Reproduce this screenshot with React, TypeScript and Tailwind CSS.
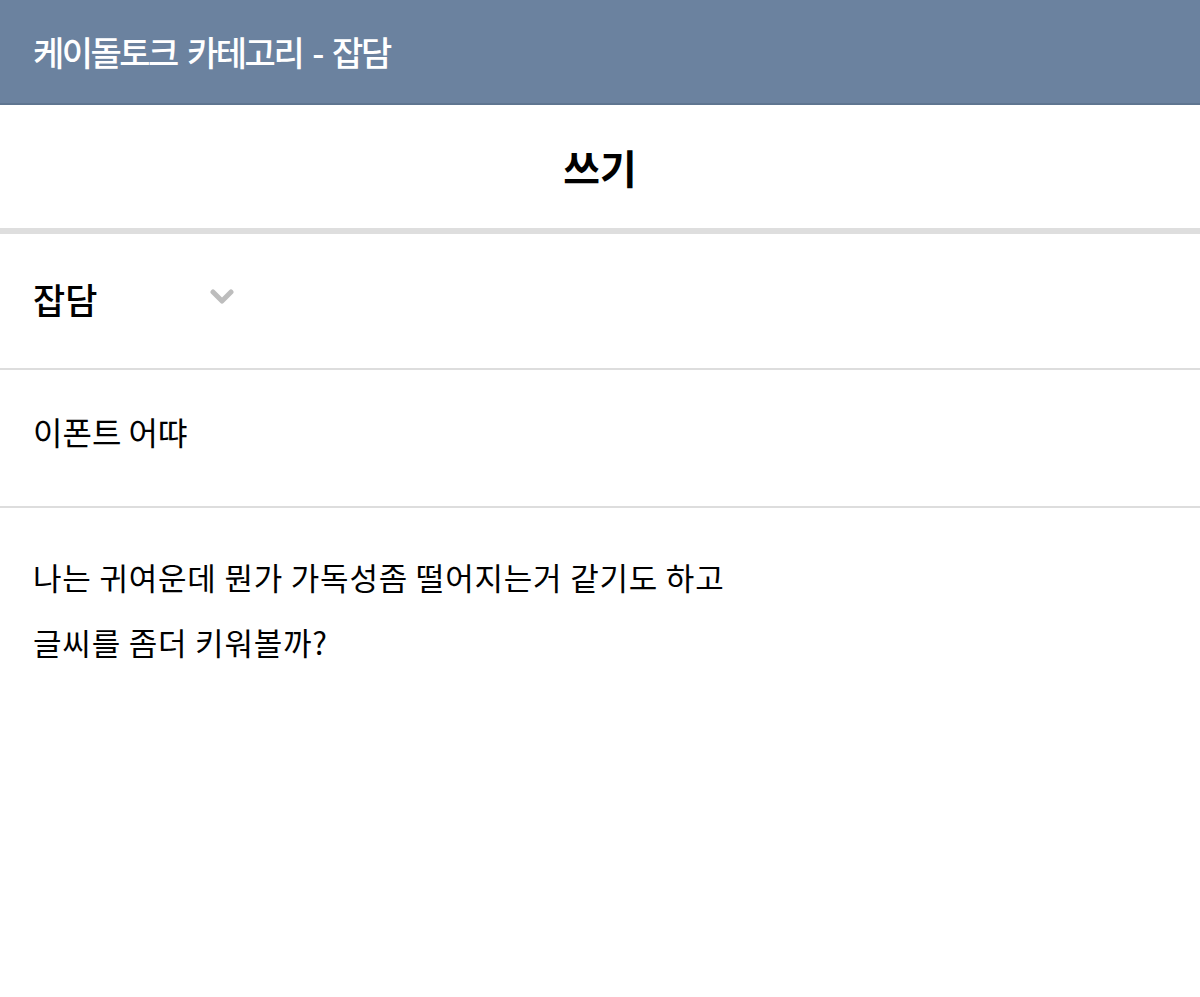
import React from "react";

export default function App() {
  const font = { fontFamily: '"Noto Sans CJK KR", "Noto Sans", sans-serif' };
  return (
    <div className="w-[1200px] h-[997px] bg-white overflow-hidden" style={font}>
      <div className="h-[105px] bg-[#6b829f] border-b-2 border-[#5f7590] flex items-center px-[33px]">
        <span className="text-white text-[34px] font-medium tracking-[-2.5px] [word-spacing:5px] leading-none">케이돌토크 카테고리 - 잡담</span>
      </div>
      <div className="h-[123px] flex items-center justify-center">
        <span className="text-black text-[40px] font-bold leading-none">쓰기</span>
      </div>
      <div className="h-[6px] bg-[#dedede]" />
      <div className="h-[136px] flex items-center px-[33px] border-b-2 border-[#dddddd]">
        <span className="text-black text-[35px] font-medium leading-none w-[177px] mt-[-6px]">잡담</span>
        <svg width="24" height="18" viewBox="0 0 24 18" className="mt-[-8px]">
          <path d="M3 4 L12 13 L21 4" stroke="#bdbdbd" strokeWidth="5" fill="none" strokeLinecap="round" strokeLinejoin="round" />
        </svg>
      </div>
      <div className="h-[138px] flex items-center px-[33px] border-b-2 border-[#dddddd]">
        <span className="text-black text-[32px] leading-none mt-[-15px]">이폰트 어땨</span>
      </div>
      <div className="px-[33px] pt-[36px] text-black text-[31px] leading-[65px] tracking-[0.8px]">
        <div>나는 귀여운데 뭔가 가독성좀 떨어지는거 같기도 하고</div>
        <div>글씨를 좀더 키워볼까?</div>
      </div>
    </div>
  );
}
